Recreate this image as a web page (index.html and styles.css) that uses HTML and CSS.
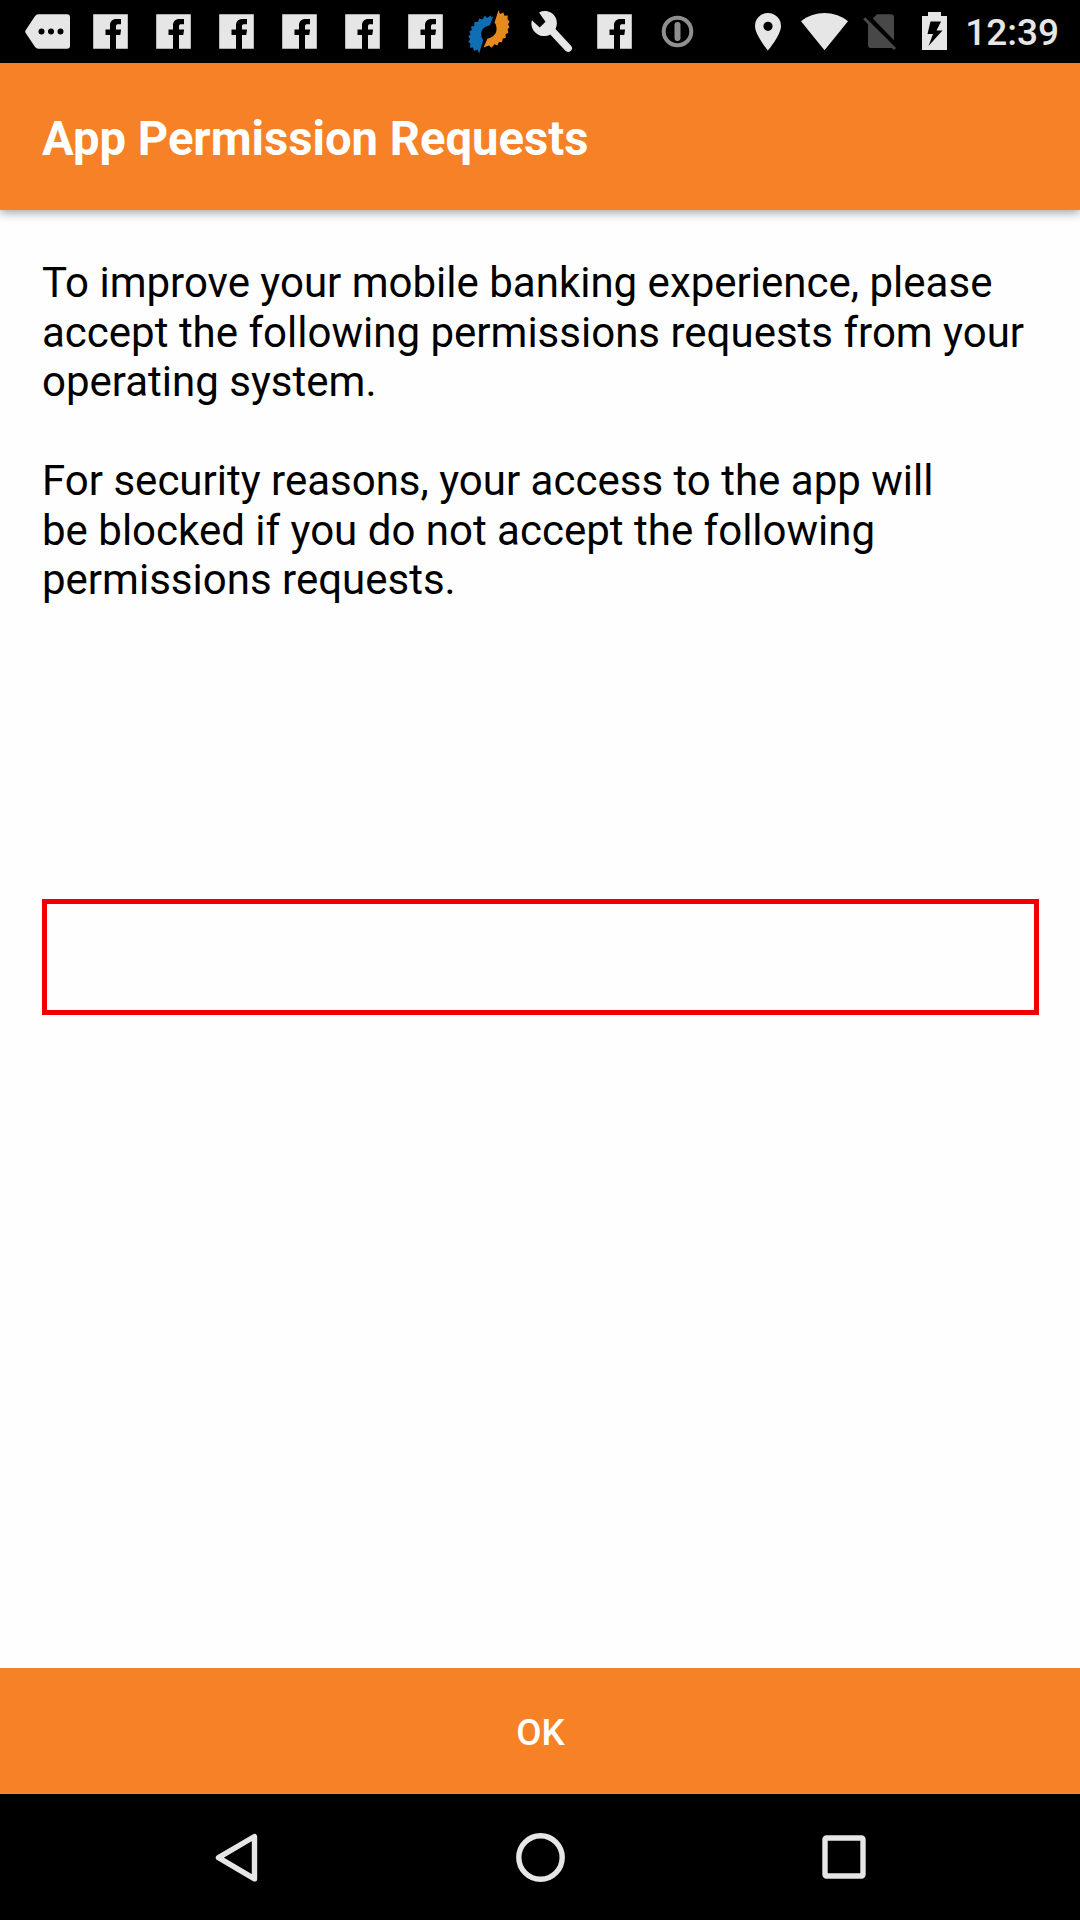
FILE: index.html
```html
<!DOCTYPE html>
<html lang="en">
<head>
<meta charset="utf-8">
<title>App Permission Requests</title>
<link rel="stylesheet" href="styles.css">
</head>
<body>
<svg class="symbols" aria-hidden="true">
  <symbol id="facebook" viewBox="0 0 63 63">
    <path fill-rule="evenodd" d="M14.200 14.200h34.600v34.600H37V35h4.300l.8-5.500H37v-3c0-1.600.8-2.200 2.200-2.200H42V19h-4.500c-4.200 0-6.500 2.600-6.500 6.500v4h-4.500V35H31v13.800H14.200z"/>
  </symbol>
</svg>
<div class="screen">
  <header class="status">
    <div class="notifications">
      <svg class="cell" viewBox="0 0 63 63"><path fill-rule="evenodd" d="M9.500 30.500 18.900 16.200Q20.300 14.300 22.300 14.300H51Q54 14.300 54 17.300V45.700Q54 48.700 51 48.700H22.300Q20.300 48.700 18.900 46.700L9.500 32.700Q8.700 31.500 9.500 30.500zM25.500 28.400a3 3 0 1 0 0 6 3 3 0 1 0 0-6zM35 28.400a3 3 0 1 0 0 6 3 3 0 1 0 0-6zM44.500 28.400a3 3 0 1 0 0 6 3 3 0 1 0 0-6z"/></svg>
      <svg class="cell"><use href="#facebook"/></svg>
      <svg class="cell"><use href="#facebook"/></svg>
      <svg class="cell"><use href="#facebook"/></svg>
      <svg class="cell"><use href="#facebook"/></svg>
      <svg class="cell"><use href="#facebook"/></svg>
      <svg class="cell"><use href="#facebook"/></svg>
      <svg class="cell" viewBox="0 0 63 63">
        <path class="gear-blue" d="M36.300 16 32.800 25.500C27.500 26 24.500 29.500 24.200 33.500 24.100 36 24.600 38 26.200 40L22.200 53.500 20.500 49.500 17 51 16 47.500 12.800 47.800 13.500 43.500 11.200 42 13.200 39 11.200 36.500 13.500 34.500 12.300 31.500 14.800 30 14 26.500 17.200 26 17.500 22 20.800 22 22.300 18.500 25.300 19.500 28 15.700 30.200 18 33.700 15.500 34.500 17.500z"/>
        <path class="gear-orange" d="M41.600 10 43 14 46.300 12.500 47.500 15.700 50.800 15.500 50.600 19.500 52.500 21.500 51 24.500 52.500 27 50.600 29.500 51.300 32.800 48.600 34.200 48.700 38 45.800 38.500 45 42.200 42 42 40.300 45.500 37.500 44.300 34.500 47.800 32 45.500 26.500 47.500 30.500 38.500C35 38 39 34.500 39.500 30 39.700 27 39.200 24.500 37.500 22.500z"/>
      </svg>
      <svg class="cell" viewBox="0 0 63 63"><path d="M11.900 20.200 19.700 27.500 25.500 21.700 19 12.400C25.200 9.200 32.200 11.500 35.300 17c2.200 4 2 8.500.2 12L50.800 45.500c2 2.100 1.700 4-.1 5.500s-3.800 1.400-5.500-.4L30.200 34.500c-4 2.300-10 2.200-14-1.300-4-3.400-5.700-8-4.300-13z"/></svg>
      <svg class="cell"><use href="#facebook"/></svg>
      <svg class="cell dim" viewBox="0 0 63 63"><circle cx="31.500" cy="31.500" r="13.800"/><path d="M31.500 25v13"/></svg>
    </div>
    <div class="system">
      <svg class="glyph place" viewBox="0 0 26 38"><path fill-rule="evenodd" d="M13 0A13 13 0 0 1 26 13C26 22 13 37.500 13 37.500S0 22 0 13A13 13 0 0 1 13 0zM13 8.700a4.600 4.600 0 1 0 0 9.200 4.600 4.600 0 1 0 0-9.200z"/></svg>
      <svg class="glyph wifi" viewBox="0 0 47 38"><path d="M0 8.200C14-2.700 33-2.700 47 8.200L23.500 37.200z"/></svg>
      <svg class="glyph sim" viewBox="0 0 34 38"><path d="M9.800 5.500 14 1.300H28q3 0 3 3v22.900zM5 9.500 30.300 34.500q-1 .5-2 .5H8q-3 0-3-3z"/><path d="M1.200 5.200 32 36" class="slash"/></svg>
      <svg class="glyph battery" viewBox="0 0 25 38"><path fill-rule="evenodd" d="M6 0h13v4h6v34H0V4h6zM8.500 9.500 5.500 22H11L6.500 34 20.500 18.500H14.500L19 9.500z"/></svg>
      <span class="clock">12:39</span>
    </div>
  </header>
  <div class="appbar"><h1>App Permission Requests</h1></div>
  <main>
    <p>To improve your mobile banking experience, please<br>accept the following permissions requests from your<br>operating system.</p>
    <p>For security reasons, your access to the app will<br>be blocked if you do not accept the following<br>permissions requests.</p>
    <div class="frame"></div>
  </main>
  <button class="ok">OK</button>
  <nav>
    <svg viewBox="0 0 50 50"><path d="M43.500 3.500v42.400L7.500 24.700z"/></svg>
    <svg viewBox="0 0 50 50"><circle cx="25.500" cy="24.500" r="21.700"/></svg>
    <svg viewBox="0 0 50 50"><rect x="6" y="5" width="38" height="38" rx="1.500"/></svg>
  </nav>
</div>
</body>
</html>
```
FILE: styles.css
```css
* { box-sizing: border-box; }
body { margin: 0; font-family: Roboto, sans-serif; }
.symbols { display: none; }
.screen {
  width: 1080px;
  height: 1920px;
  display: flex;
  flex-direction: column;
  background: #fefefe;
  overflow: hidden;
}
.status {
  height: 63px;
  flex: none;
  display: flex;
  justify-content: space-between;
  padding: 0 21px 0 16px;
  background: #000;
  fill: #e6e6e6;
  color: #e6e6e6;
}
.notifications { display: flex; }
.cell { width: 63px; height: 63px; }
.gear-blue { fill: #0f6fb4; }
.gear-orange { fill: #e58a1e; }
.dim { fill: none; stroke: #8f8f8f; stroke-width: 4; }
.dim path { stroke-width: 6; stroke-linecap: round; }
.system { display: flex; align-items: flex-start; }
.glyph { height: 38px; margin-top: 13px; }
.place { width: 26px; margin-right: 20px; }
.wifi { width: 47px; margin-right: 15px; }
.sim { width: 34px; margin-right: 25px; fill: #484848; }
.slash { stroke: #484848; stroke-width: 3; }
.battery { width: 25px; margin-top: 12px; margin-right: 18px; }
.clock { font-size: 37px; font-weight: 500; line-height: 65px; }
.appbar {
  height: 147px;
  flex: none;
  display: flex;
  align-items: center;
  padding: 4px 42px 0;
  background: #f68126;
  box-shadow: 0 3px 9px rgba(0, 0, 0, .35);
}
h1 { margin: 0; font-size: 47.200px; font-weight: 700; color: #fff; }
main { flex: 1; padding: 48px 41px 0 42px; }
p { margin: 0 0 49.5px; font-size: 42.030px; line-height: 49.5px; color: #000; white-space: nowrap; }
.frame { height: 116px; margin-top: 294px; border: 5px solid #f00000; }
.ok {
  height: 126px;
  flex: none;
  border: 0;
  padding: 2px 0 0 1px;
  background: #f68126;
  color: #fff;
  font: 500 36.750px Roboto, sans-serif;
}
nav {
  height: 126px;
  flex: none;
  display: flex;
  justify-content: center;
  align-items: center;
  gap: 254px;
  padding-top: 1px;
  background: #000;
  fill: none;
  stroke: #e6e6e6;
  stroke-width: 5.400;
  stroke-linejoin: round;
}
nav svg { width: 50px; height: 50px; }
```
